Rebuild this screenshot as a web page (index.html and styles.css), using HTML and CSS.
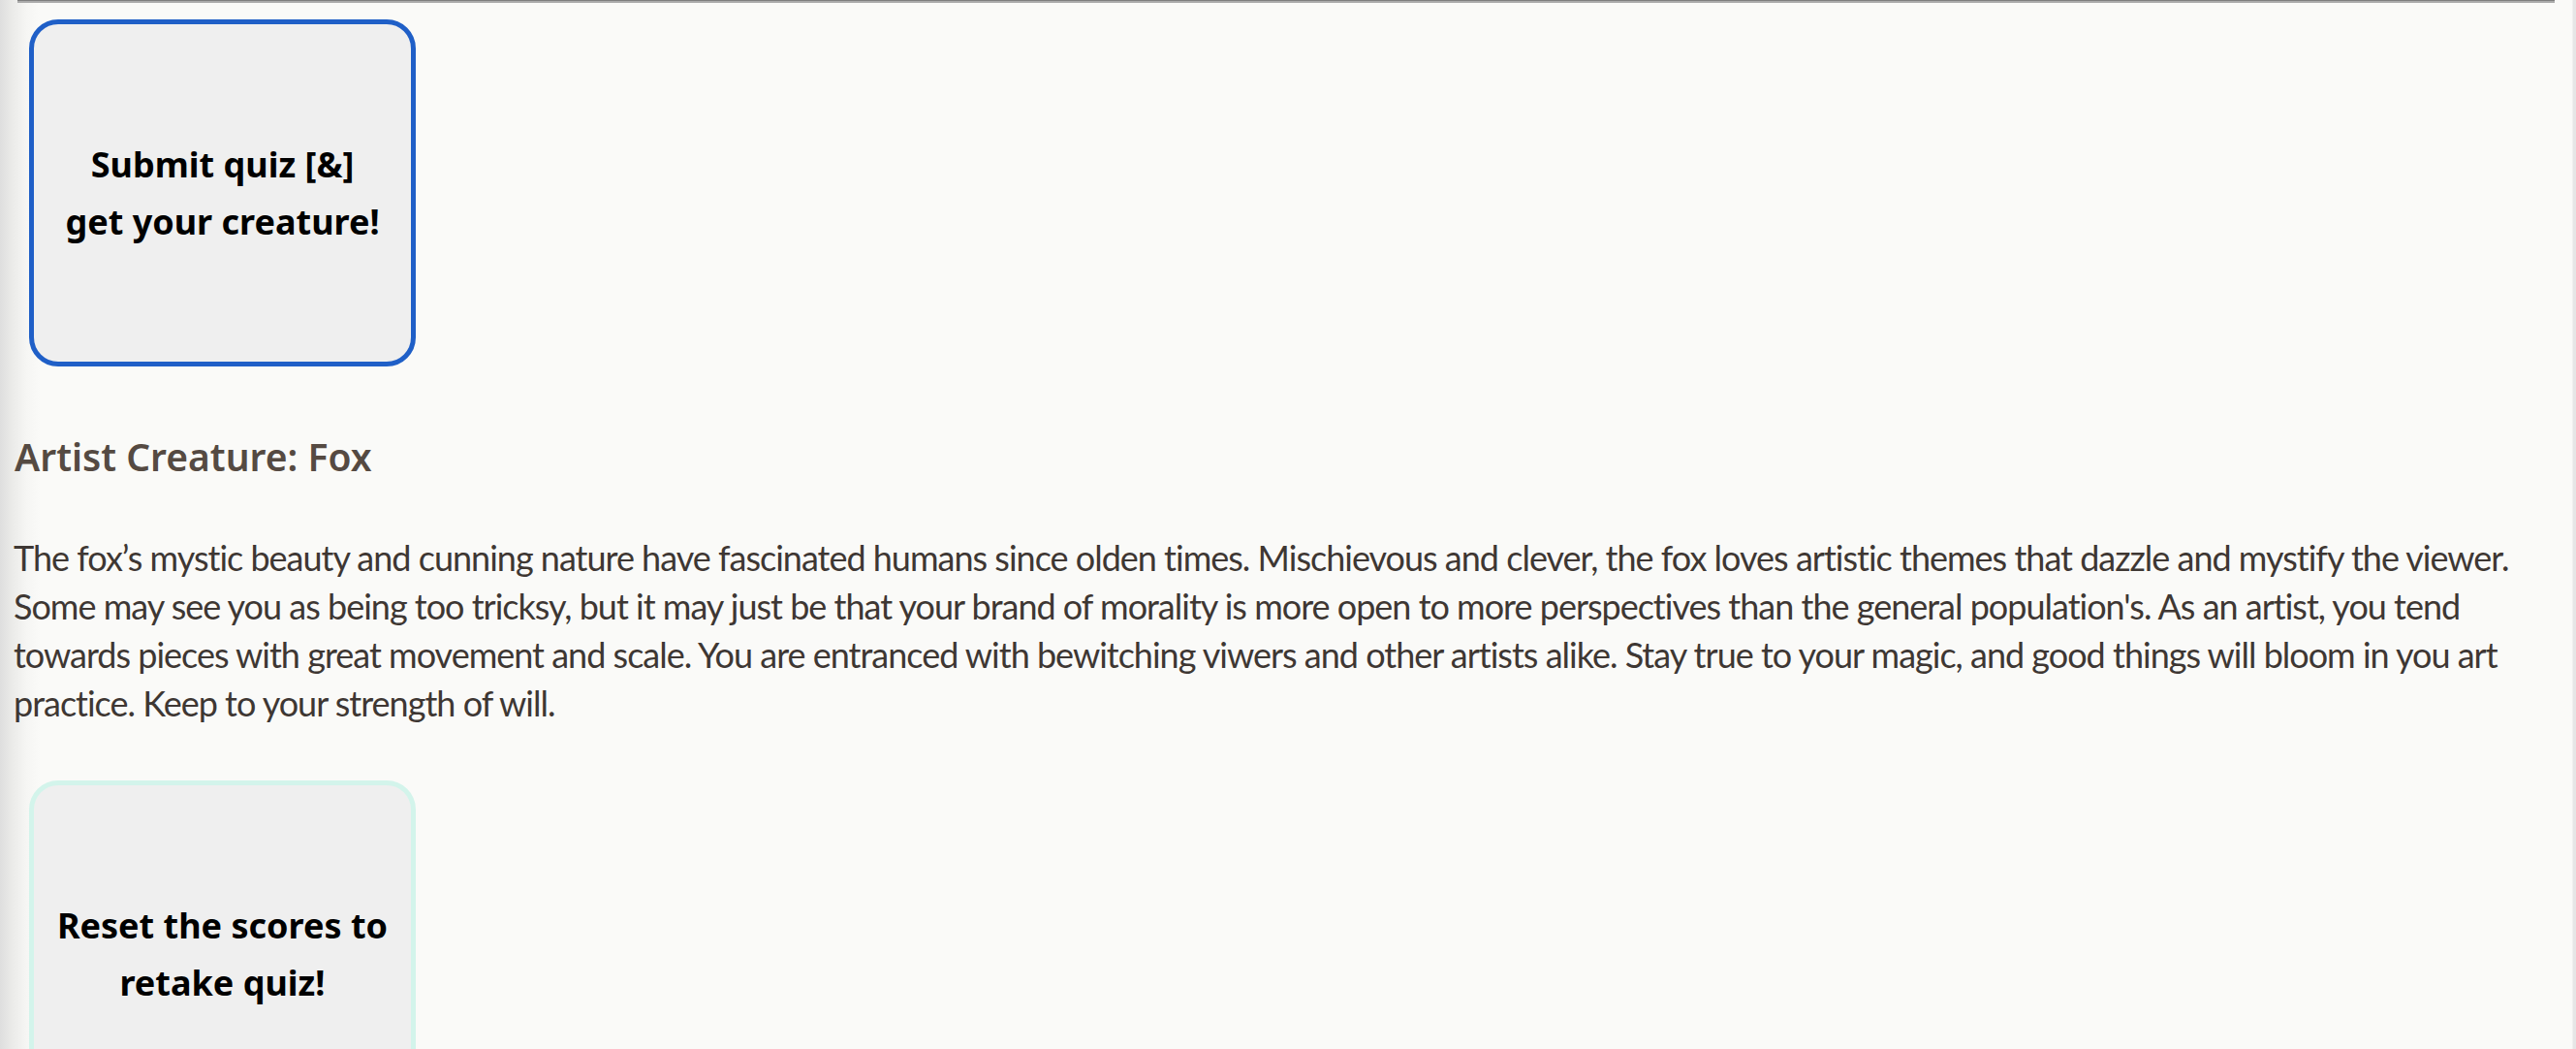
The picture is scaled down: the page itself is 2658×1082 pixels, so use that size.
FILE: index.html
```html
<!DOCTYPE html>
<html lang="en">
<head>
<meta charset="utf-8">
<title>Artist Creature Quiz</title>
<link rel="stylesheet" href="styles.css">
</head>
<body>
<div class="page">
  <div class="rule"></div>
  <button class="quiz-btn submit-btn" type="button">Submit quiz [&amp;]<br>get your creature!</button>
  <h2 class="result-title">Artist Creature: Fox</h2>
  <p class="result-text">The fox’s mystic beauty and cunning nature have fascinated humans since olden times. Mischievous and clever, the fox loves artistic themes that dazzle and mystify the viewer. Some may see you as being too tricksy, but it may just be that your brand of morality is more open to more perspectives than the general population's. As an artist, you tend towards pieces with great movement and scale. You are entranced with bewitching viwers and other artists alike. Stay true to your magic, and good things will bloom in you art practice. Keep to your strength of will.</p>
  <button class="quiz-btn reset-btn" type="button">Reset the scores to<br>retake quiz!</button>
</div>
</body>
</html>
```

FILE: styles.css
```css
html, body {
  margin: 0;
  padding: 0;
}
body {
  width: 2658px;
  height: 1082px;
  overflow: hidden;
  background:
    linear-gradient(to right, #dedede 0, #ececea 14px, #f6f6f4 28px, #fafaf8 42px, #fafaf8 2654px, #e6e6e6 2655px, #e6e6e6 2658px);
}
.page {
  display: flex;
  flex-direction: column;
  align-items: flex-start;
}
.rule {
  align-self: stretch;
  margin: 0 22px 0 18px;
  height: 2px;
  border-top: 1px solid #7e7e7e;
  background: #ababab;
}
.quiz-btn {
  box-sizing: border-box;
  width: 399px;
  height: 358px;
  margin-left: 30px;
  border-radius: 30px;
  background: #efefef;
  font-family: "Noto Sans", sans-serif;
  font-weight: 700;
  font-size: 36px;
  line-height: 59px;
  color: #000;
  text-align: center;
  padding: 0;
}
.submit-btn {
  margin-top: 17px;
  border: 5px solid #1f5fc7;
}
.reset-btn {
  margin-top: 55px;
  border: 5px solid #d3f4eb;
}
.result-title {
  margin: 73px 0 0 15px;
  font-family: "Noto Sans", sans-serif;
  font-weight: 600;
  font-size: 39px;
  line-height: 40px;
  color: #554a42;
}
.result-text {
  margin: 59px 0 0 14px;
  width: 2622px;
  font-family: Lato, "Noto Sans", sans-serif;
  font-weight: 400;
  font-size: 36px;
  letter-spacing: -1px;
  line-height: 50px;
  color: #3e3733;
}
```
